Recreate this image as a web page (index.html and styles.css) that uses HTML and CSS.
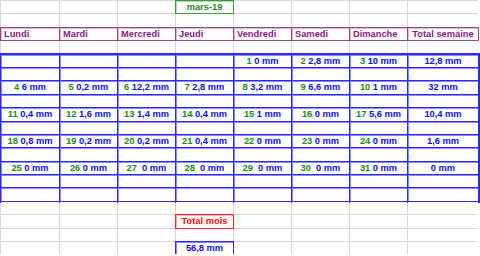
FILE: index.html
```html
<!DOCTYPE html>
<html lang="fr">
  <head>
    <meta charset="UTF-8" />
    <meta name="viewport" content="width=device-width, initial-scale=1.0" />
    <title>Pluie mars-19</title>
    <link rel="stylesheet" href="styles.css">
  </head>
  <body>
    <div class="sheet">
      <div class="row">
        <div class="cell"></div><div class="cell"></div><div class="cell"></div>
        <div class="cell month">mars-19</div>
        <div class="cell"></div><div class="cell"></div><div class="cell"></div><div class="cell"></div>
      </div>
      <div class="row">
        <div class="cell"></div><div class="cell"></div><div class="cell"></div><div class="cell"></div>
        <div class="cell"></div><div class="cell"></div><div class="cell"></div><div class="cell"></div>
      </div>
      <div class="row">
        <div class="cell head">Lundi</div>
        <div class="cell head">Mardi</div>
        <div class="cell head">Mercredi</div>
        <div class="cell head">Jeudi</div>
        <div class="cell head">Vendredi</div>
        <div class="cell head">Samedi</div>
        <div class="cell head">Dimanche</div>
        <div class="cell head total-head">Total semaine</div>
      </div>
      <div class="row">
        <div class="cell"></div><div class="cell"></div><div class="cell"></div><div class="cell"></div>
        <div class="cell"></div><div class="cell"></div><div class="cell"></div><div class="cell"></div>
      </div>

      <div class="week">
        <div class="row">
          <div class="cell"></div><div class="cell"></div><div class="cell"></div><div class="cell"></div>
          <div class="cell data"><span class="day">1</span> 0 mm</div>
          <div class="cell data"><span class="day">2</span> 2,8 mm</div>
          <div class="cell data"><span class="day">3</span> 10 mm</div>
          <div class="cell data sum">12,8 mm</div>
        </div>
        <div class="row">
          <div class="cell"></div><div class="cell"></div><div class="cell"></div><div class="cell"></div>
          <div class="cell"></div><div class="cell"></div><div class="cell"></div><div class="cell"></div>
        </div>
        <div class="row">
          <div class="cell data"><span class="day">4</span> 6 mm</div>
          <div class="cell data"><span class="day">5</span> 0,2 mm</div>
          <div class="cell data"><span class="day">6</span> 12,2 mm</div>
          <div class="cell data"><span class="day">7</span> 2,8 mm</div>
          <div class="cell data"><span class="day">8</span> 3,2 mm</div>
          <div class="cell data"><span class="day">9</span> 6,6 mm</div>
          <div class="cell data"><span class="day">10</span> 1 mm</div>
          <div class="cell data sum">32 mm</div>
        </div>
        <div class="row">
          <div class="cell"></div><div class="cell"></div><div class="cell"></div><div class="cell"></div>
          <div class="cell"></div><div class="cell"></div><div class="cell"></div><div class="cell"></div>
        </div>
        <div class="row">
          <div class="cell data"><span class="day">11</span> 0,4 mm</div>
          <div class="cell data"><span class="day">12</span> 1,6 mm</div>
          <div class="cell data"><span class="day">13</span> 1,4 mm</div>
          <div class="cell data"><span class="day">14</span> 0,4 mm</div>
          <div class="cell data"><span class="day">15</span> 1 mm</div>
          <div class="cell data"><span class="day">16</span> 0 mm</div>
          <div class="cell data"><span class="day">17</span> 5,6 mm</div>
          <div class="cell data sum">10,4 mm</div>
        </div>
        <div class="row">
          <div class="cell"></div><div class="cell"></div><div class="cell"></div><div class="cell"></div>
          <div class="cell"></div><div class="cell"></div><div class="cell"></div><div class="cell"></div>
        </div>
        <div class="row">
          <div class="cell data"><span class="day">18</span> 0,8 mm</div>
          <div class="cell data"><span class="day">19</span> 0,2 mm</div>
          <div class="cell data"><span class="day">20</span> 0,2 mm</div>
          <div class="cell data"><span class="day">21</span> 0,4 mm</div>
          <div class="cell data"><span class="day">22</span> 0 mm</div>
          <div class="cell data"><span class="day">23</span> 0 mm</div>
          <div class="cell data"><span class="day">24</span> 0 mm</div>
          <div class="cell data sum">1,6 mm</div>
        </div>
        <div class="row">
          <div class="cell"></div><div class="cell"></div><div class="cell"></div><div class="cell"></div>
          <div class="cell"></div><div class="cell"></div><div class="cell"></div><div class="cell"></div>
        </div>
        <div class="row">
          <div class="cell data"><span class="day">25</span> 0 mm</div>
          <div class="cell data"><span class="day">26</span> 0 mm</div>
          <div class="cell data"><span class="day">27</span>  0 mm</div>
          <div class="cell data"><span class="day">28</span>  0 mm</div>
          <div class="cell data"><span class="day">29</span>  0 mm</div>
          <div class="cell data"><span class="day">30</span>  0 mm</div>
          <div class="cell data"><span class="day">31</span> 0 mm</div>
          <div class="cell data sum">0 mm</div>
        </div>
        <div class="row">
          <div class="cell"></div><div class="cell"></div><div class="cell"></div><div class="cell"></div>
          <div class="cell"></div><div class="cell"></div><div class="cell"></div><div class="cell"></div>
        </div>
        <div class="row">
          <div class="cell"></div><div class="cell"></div><div class="cell"></div><div class="cell"></div>
          <div class="cell"></div><div class="cell"></div><div class="cell"></div><div class="cell"></div>
        </div>
      </div>

      <div class="row">
        <div class="cell"></div><div class="cell"></div><div class="cell"></div><div class="cell"></div>
        <div class="cell"></div><div class="cell"></div><div class="cell"></div><div class="cell"></div>
      </div>
      <div class="row">
        <div class="cell"></div><div class="cell"></div><div class="cell"></div>
        <div class="cell total-label">Total mois</div>
        <div class="cell"></div><div class="cell"></div><div class="cell"></div><div class="cell"></div>
      </div>
      <div class="row">
        <div class="cell"></div><div class="cell"></div><div class="cell"></div><div class="cell"></div>
        <div class="cell"></div><div class="cell"></div><div class="cell"></div><div class="cell"></div>
      </div>
      <div class="row">
        <div class="cell"></div><div class="cell"></div><div class="cell"></div>
        <div class="cell total-value">56,8 mm</div>
        <div class="cell"></div><div class="cell"></div><div class="cell"></div><div class="cell"></div>
      </div>
    </div>
  </body>
</html>
```

FILE: styles.css
```css
body {
  margin: 0;
  background-color: #ffffff;
  font-family: "Liberation Sans", Arial, sans-serif;
  font-weight: bold;
  font-size: 9.3px;
  overflow: hidden;
}
.sheet {
  display: flex;
  flex-direction: column;
  gap: 1px;
  width: fit-content;
  padding: 1px 0 0 1px;
  background-color: #d8d8d8;
}
.row {
  display: grid;
  grid-template-columns: 58px 57px 57px 57px 57px 57px 57px 70px;
  gap: 1px;
  height: 12.4px;
}
.cell {
  background-color: #ffffff;
  line-height: 13px;
  white-space: pre;
  overflow: hidden;
}
.month {
  outline: 1px solid #3a9a3a;
  box-shadow: inset 1px 1px 0 #b5dbb5;
  color: #1f8a1f;
  text-align: center;
}
.head {
  outline: 1px solid #a0467a;
  box-shadow: inset 1px 1px 0 #dcb8cc;
  color: #84207f;
  padding-left: 3px;
}
.total-head {
  padding-left: 0;
  text-align: center;
}
.week {
  display: flex;
  flex-direction: column;
  gap: 1px;
  background-color: #2a2af2;
  outline: 2px solid #2a2af2;
}
.week .cell {
  box-shadow: inset 1px 1px 0 #8a8af6;
}
.data {
  color: #1010f0;
  text-align: center;
}
.day {
  color: #218c21;
}
.total-label {
  outline: 1px solid #ff2020;
  box-shadow: inset 1px 1px 0 #ffb0b0;
  color: #ff1010;
  text-align: center;
}
.total-value {
  outline: 1px solid #2a2af2;
  box-shadow: inset 1px 1px 0 #8a8af6;
  color: #1010f0;
  text-align: center;
}
```
